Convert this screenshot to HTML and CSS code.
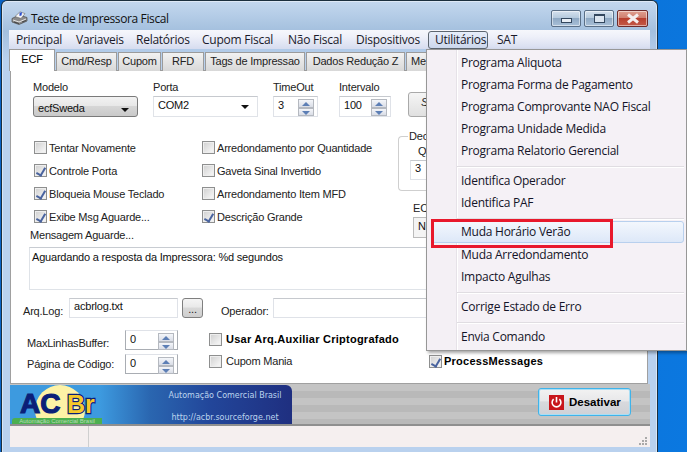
FILE: index.html
```html
<!DOCTYPE html>
<html lang="pt">
<head>
<meta charset="utf-8">
<title>Teste de Impressora Fiscal</title>
<link rel="stylesheet" href="styles.css">
</head>
<body>
<div class="window">
  <div class="titlebar">
    <svg class="appicon" width="17" height="14" viewBox="0 0 17 14"><path d="M1 7.5 L8 4 L16 6.5 L16 10 L8 13.5 L1 11 Z" fill="#8b8b8b" stroke="#4a4a4a" stroke-width=".7"/><path d="M4 5.5 L9 .8 L14 2.6 L10 7.5 Z" fill="#f4f4f4" stroke="#666" stroke-width=".6"/><path d="M8.5 1.8 L11 1.2 L10.5 4.5 L8.5 5 Z" fill="#2a4fd0"/><path d="M2 9 L8 11 L15 8" fill="none" stroke="#ececec" stroke-width=".9"/><path d="M3 11 L8 12.5 M11 11 L15 9.5" stroke="#333" stroke-width=".8"/></svg>
    <span class="title">Teste de Impressora Fiscal</span>
    <div class="winbtns">
      <span class="winbtn"><i class="glyph-min"></i></span>
      <span class="winbtn"><i class="glyph-max"></i></span>
      <span class="winbtn close"><svg width="18" height="11" viewBox="0 0 18 11"><path d="M4 1.5 L14 9.5 M14 1.5 L4 9.5" stroke="#f4eeee" stroke-width="3"/></svg></span>
    </div>
  </div>
  <div class="client">
    <nav class="menubar">
      <span class="mi m-principal">Principal</span>
      <span class="mi m-var">Variaveis</span>
      <span class="mi m-rel">Relatórios</span>
      <span class="mi m-cup">Cupom Fiscal</span>
      <span class="mi m-nao">Não Fiscal</span>
      <span class="mi m-dis">Dispositivos</span>
      <span class="mi m-uti">Utilitários</span>
      <span class="mi m-sat">SAT</span>
    </nav>
    <div class="tabs">
      <span class="tab active t1">ECF</span>
      <span class="tab t2">Cmd/Resp</span>
      <span class="tab t3">Cupom</span>
      <span class="tab t4">RFD</span>
      <span class="tab t5">Tags de Impressao</span>
      <span class="tab t6">Dados Redução Z</span>
      <span class="tab t7">Me</span>
    </div>
    <main class="panel">
      <div class="row-top">
        <div class="field f-modelo"><label>Modelo</label><div class="select aero"><span>ecfSweda</span><i class="arrow"></i></div></div>
        <div class="field f-porta"><label>Porta</label><div class="select"><span>COM2</span><i class="arrow"></i></div></div>
        <div class="field f-time"><label>TimeOut</label><div class="spin"><span>3</span><b class="spinbtns"><i class="up"></i><i class="down"></i></b></div></div>
        <div class="field f-int"><label>Intervalo</label><div class="spin"><span>100</span><b class="spinbtns"><i class="up"></i><i class="down"></i></b></div></div>
        <div class="toolbtn">S</div>
      </div>
      <div class="checks">
        <div class="col c1">
          <div class="chk"><i class="box"></i>Tentar Novamente</div>
          <div class="chk"><i class="box on"></i>Controle Porta</div>
          <div class="chk"><i class="box on"></i>Bloqueia Mouse Teclado</div>
          <div class="chk"><i class="box on"></i>Exibe Msg Aguarde...</div>
        </div>
        <div class="col c2">
          <div class="chk"><i class="box"></i>Arredondamento por Quantidade</div>
          <div class="chk"><i class="box"></i>Gaveta Sinal Invertido</div>
          <div class="chk"><i class="box"></i>Arredondamento Item MFD</div>
          <div class="chk"><i class="box on"></i>Descrição Grande</div>
        </div>
        <div class="col c3">
          <div class="group">
            <span class="legend">Dec</span>
            <span class="q">Q</span>
            <div class="edit e-dec">3</div>
          </div>
          <div class="ec">EC</div>
          <div class="edit e-ec">N</div>
        </div>
      </div>
      <div class="msg-label">Mensagem Aguarde...</div>
      <div class="memo">Aguardando a resposta da Impressora: %d segundos</div>
      <div class="row-log">
        <label class="l-log">Arq.Log:</label>
        <div class="edit e-log">acbrlog.txt</div>
        <div class="dots">...</div>
        <label class="l-op">Operador:</label>
        <div class="edit e-op"></div>
      </div>
      <div class="row-bottom">
        <div class="spins">
          <div class="spinrow"><label class="l-max">MaxLinhasBuffer:</label><div class="spin sp2"><span>0</span><b class="spinbtns"><i class="up"></i><i class="down"></i></b></div></div>
          <div class="spinrow"><label class="l-pag">Página de Código:</label><div class="spin sp2"><span>0</span><b class="spinbtns"><i class="up"></i><i class="down"></i></b></div></div>
        </div>
        <div class="opts">
          <div class="chk strong"><i class="box"></i>Usar Arq.Auxiliar Criptografado</div>
          <div class="chk"><i class="box"></i>Cupom Mania</div>
        </div>
        <div class="chk strong pm"><i class="box on"></i>ProcessMessages</div>
      </div>
    </main>
    <div class="banner">
      <div class="logo">
        <div class="logo-mark">
          <i class="sun"></i>
          <span class="ac">AC</span><span class="br">Br</span>
          <span class="strip">Automação Comercial Brasil</span>
        </div>
        <div class="logo-text">
          <span>Automação Comercial Brasil</span>
          <span>http://acbr.sourceforge.net</span>
        </div>
      </div>
      <div class="deact">
        <svg width="15" height="15" viewBox="0 0 15 15"><rect width="15" height="15" fill="#c8161b"/><path d="M4.6 4.2 A4.4 4.4 0 1 0 10.4 4.2" fill="none" stroke="#fff" stroke-width="1.6"/><path d="M7.5 2 V7.5" stroke="#fff" stroke-width="1.6"/></svg>
        <span>Desativar</span>
      </div>
    </div>
    <footer class="status">
      <span class="st1"></span>
      <span class="st2"></span>
      <svg class="grip" width="10" height="10" viewBox="0 0 10 10"><path d="M7 1h2v2H7zM4 4h2v2H4zM7 4h2v2H7zM1 7h2v2H1zM4 7h2v2H4zM7 7h2v2H7z" fill="#a9a9a9"/></svg>
    </footer>
  </div>
</div>

<div class="menu">
  <div class="item">Programa Aliquota</div>
  <div class="item">Programa Forma de Pagamento</div>
  <div class="item">Programa Comprovante NAO Fiscal</div>
  <div class="item">Programa Unidade Medida</div>
  <div class="item">Programa Relatorio Gerencial</div>
  <div class="sep"></div>
  <div class="item">Identifica Operador</div>
  <div class="item">Identifica PAF</div>
  <div class="sep s2"></div>
  <div class="item hot">Muda Horário Verão</div>
  <div class="item">Muda Arredondamento</div>
  <div class="item">Impacto Agulhas</div>
  <div class="sep"></div>
  <div class="item">Corrige Estado de Erro</div>
  <div class="sep"></div>
  <div class="item">Envia Comando</div>
</div>
<div class="callout"></div>
</body>
</html>
```

FILE: styles.css
```css
* { box-sizing: border-box; }
html, body { margin: 0; height: 100%; }
body {
  width: 687px; height: 452px; position: relative; overflow: hidden;
  background: linear-gradient(100deg, #0a62c4 0%, #0b78e0 100%);
  font: 11px "Liberation Sans", Arial, sans-serif;
  letter-spacing: -.2px;
  color: #222;
}
.window {
  position: absolute; left: 1px; top: 0; width: 657px; height: 460px;
  border: 1px solid #1c2f3e; border-bottom: 0; border-radius: 6px 6px 0 0;
  background: linear-gradient(180deg, #c4d8ef 0, #a4c0de 30px, #b9d1ee 60px);
  box-shadow: inset 0 0 0 1px rgba(255,255,255,.45);
}
.titlebar { height: 29px; display: flex; align-items: center; padding: 0 9px; position: relative; }
.appicon { margin-top: 5px; flex: none; }
.title {
  font: 12px "Open Sans", "Noto Sans", sans-serif; color: #111; margin: 6px 0 0 3px;
  letter-spacing: -.38px;
}
.winbtns { margin-left: auto; display: flex; gap: 3px; align-self: flex-start; margin-top: 9px; }
.winbtn {
  width: 30px; height: 17px; border: 1px solid #5a6f87; border-radius: 2px;
  background: linear-gradient(180deg, #d5e1ee 0, #b6cade 45%, #8fa9c4 50%, #a9c0d8 100%);
  box-shadow: inset 0 0 0 1px rgba(255,255,255,.5);
  display: flex; align-items: center; justify-content: center;
}
.winbtn.close {
  width: 31px; border-color: #6e2b2b;
  background: linear-gradient(180deg, #e0a090 0, #d08070 45%, #b8402f 50%, #c45a48 100%);
}
.glyph-min { width: 11px; height: 5px; margin-top: 4px; border: 1px solid #33475e; background: #e8eef5; }
.glyph-max { width: 11px; height: 9px; border: 1px solid #33475e; border-top-width: 2px; background: #dbe5f0; }

.client { margin: 0 7px; }
.menubar {
  height: 19px; position: relative; display: flex; align-items: center;
  background: linear-gradient(180deg, #f6f7fc 0, #eef0f9 35%, #d6dcef 100%);
  font: 12px "Open Sans", "Noto Sans", sans-serif; color: #1a1a2a;
  letter-spacing: -.25px;
}
.mi { white-space: nowrap; }
.m-principal { margin-left: 7px; width: 60px; }
.m-var { width: 60px; }
.m-rel { width: 66px; }
.m-cup { width: 86px; }
.m-nao { width: 68px; }
.m-dis { width: 72px; }
.m-uti {
  width: 60px; height: 18px; line-height: 15px; padding-left: 6px;
  border: 1px solid #5d6670; border-radius: 3px;
  background: linear-gradient(180deg, #e8eefa, #ccd7ec);
}
.m-sat { margin-left: 9px; }

.tabs { height: 22px; display: flex; gap: 1px; align-items: flex-end; margin-bottom: -1px; position: relative; z-index: 1; }
.tab {
  height: 19px; line-height: 17px; text-align: center; white-space: nowrap; overflow: hidden;
  border: 1px solid #9b9b9b; border-bottom: 0; color: #222;
  background: linear-gradient(180deg, #f2f2f2 0, #e6e6e6 45%, #d8d8d8 100%);
}
.tab.active { height: 22px; line-height: 18px; background: #fff; color: #000; }
.t1 { width: 46px; } .t2 { width: 61px; } .t3 { width: 43px; } .t4 { width: 42px; }
.t5 { width: 100px; } .t6 { width: 99px; } .t7 { width: 24px; text-align: left; padding-left: 4px; }

.panel {
  height: 314px; margin-left: 1px; width: 638px; background: #fff;
  border: 1px solid #a0a0a0; border-top-color: #9b9b9b; padding-top: 9px;
}
label { display: block; white-space: nowrap; }
.row-top { display: flex; padding-left: 22px; height: 37px; }
.field label { height: 16px; line-height: 15px; }
.f-modelo, .f-porta { width: 105px; margin-right: 15px; }
.f-time { width: 45px; margin-right: 21px; }
.f-int { width: 52px; margin-right: 17px; }
.select {
  height: 21px; display: flex; align-items: center; justify-content: space-between;
  padding: 0 8px 3px 4px; border: 1px solid #e0e3e8; border-top-color: #c6c9ce; background: #fff; color: #111;
}
.select.aero {
  border: 1px solid #7a7a7a; border-radius: 3px; padding: 3px 8px 0 4px;
  background: linear-gradient(180deg, #f2f2f2 0, #e8e8e8 45%, #d6d6d6 50%, #c9c9c9 100%);
}
.select .arrow { margin-top: 3px; }
.arrow { width: 0; height: 0; border: 4px solid transparent; border-top: 4px solid #111; border-bottom: 0; display: block; }
.spin {
  height: 21px; display: flex; align-items: flex-start; justify-content: space-between;
  border: 1px solid #dfe2e8; border-top-color: #c6c9ce; background: #fff; padding: 2px 3px 0 4px; color: #111;
}
.spinbtns { display: flex; flex-direction: column; width: 16px; height: 17px; }
.spinbtns i {
  flex: 1; border: 1px solid #b5b9c0; background: linear-gradient(180deg, #f4f6fa, #d9dde6); position: relative; display: block;
}
.spinbtns i::after {
  content: ""; position: absolute; left: 3px; top: 2px; width: 0; height: 0;
  border: 4px solid transparent; border-top: 0; border-bottom: 4px solid #5d7fb5;
}
.spinbtns i.down::after { border-bottom: 0; border-top: 4px solid #5d7fb5; }
.toolbtn {
  width: 40px; height: 25px; margin-top: 12px; border: 1px solid #a9a9a9; border-radius: 3px;
  background: linear-gradient(180deg, #f5f5f5, #e0e0e0); padding: 3px 0 0 12px; font-style: italic;
}

.checks { display: flex; height: 93px; margin-top: 19px; }
.col { flex: none; }
.c1 { width: 168px; margin-left: 23px; }
.c2 { width: 196px; }
.c3 { width: 80px; }
.chk { height: 23px; display: flex; align-items: center; white-space: nowrap; }
.box {
  width: 13px; height: 13px; flex: none; margin-right: 2px; position: relative; display: block;
  border: 1px solid #8e8f8f; background: linear-gradient(135deg, #cfcfcf, #f2f2f2 80%);
  box-shadow: inset 0 0 0 1px #eee;
}
.box.on::after {
  content: ""; position: absolute; left: 3px; top: 1px; width: 4px; height: 8px;
  border: solid #4a649f; border-width: 0 2px 2px 0; transform: rotate(30deg);
}
.group {
  position: relative; height: 55px; border: 1px solid #cfcfcf; border-radius: 4px; border-right: 0; padding: 8px 0 0 11px;
}
.legend { position: absolute; left: 9px; top: -7px; width: 30px; background: #fff; padding: 0 1px; }
.q { display: block; padding-left: 8px; height: 15px; }
.edit { border: 1px solid #dfe2e8; border-top-color: #c6c9ce; background: #fff; color: #111; padding: 1px 4px 0; white-space: nowrap; }
.e-dec { height: 20px; width: 60px; }
.ec { margin: 10px 0 2px 15px; height: 14px; line-height: 14px; }
.e-ec { height: 21px; margin-left: 15px; width: 50px; background: #f4f4f4; border-color: #bbb; padding-top: 2px; }

.msg-label { margin: -1px 0 0 19px; height: 19px; line-height: 14px; }
.memo {
  margin-left: 18px; width: 612px; height: 43px; border: 1px solid #dfe3e8; border-top-color: #c8ccd2; padding: 3px 2px; color: #111;
}
.row-log { display: flex; align-items: flex-end; margin-top: 7px; height: 21px; padding-left: 12px; }
.l-log { width: 46px; line-height: 13px; }
.e-log { width: 109px; height: 20px; }
.dots {
  width: 21px; height: 20px; margin-left: 4px; text-align: center; border: 1px solid #7f7f7f; border-radius: 3px;
  background: linear-gradient(180deg, #f4f4f4 0, #e9e9e9 45%, #d8d8d8 50%, #cfcfcf 100%); line-height: 20px;
}
.l-op { margin-left: 18px; width: 52px; line-height: 13px; }
.e-op { width: 350px; height: 20px; }

.row-bottom { display: flex; margin-top: 12px; padding-left: 16px; }
.spins { width: 151px; flex: none; }
.spinrow { display: flex; height: 20px; margin-bottom: 4px; align-items: flex-end; }
.spinrow label { width: 98px; line-height: 13px; }
.l-pag { margin-bottom: 3px; }
.sp2 { width: 53px; height: 20px; border-color: #a9adb3; border-top-color: #dfe2e8; }
.opts { width: 220px; margin-left: 31px; flex: none; margin-top: -2px; }
.opts .chk { height: 22px; }
.opts .chk .box { margin-right: 4px; }
.strong { font-weight: 700; color: #000; letter-spacing: .25px; }
.pm { margin-top: 20px; height: 22px; }

.banner {
  height: 42px; margin-left: 1px; width: 640px; display: flex; align-items: flex-start; justify-content: space-between;
  background: repeating-linear-gradient(180deg, #c4c4c4 0 7px, #b9b9b9 7px 14px);
  border-bottom: 2px solid #8f8f8f; padding: 1px 19px 0 0;
}
.logo { width: 282px; height: 39px; display: flex; border-radius: 0 6px 0 0; overflow: hidden;
  background: linear-gradient(90deg, #3d9adf 0, #3d9adf 90px, #2a66b0 140px, #22469a 200px, #1f2f80 282px); }
.logo-mark { width: 92px; height: 39px; position: relative; overflow: hidden; flex: none; font-family: "Liberation Sans", sans-serif; font-weight: 700; letter-spacing: 0; }
.sun { position: absolute; left: 25px; top: 0; width: 50px; height: 50px; border-radius: 50%; background: #fdf2a6; }
.ac { position: absolute; left: 10px; top: 8px; font-size: 28px; line-height: 22px; color: #0b1f78; -webkit-text-stroke: 1.2px #0b1f78; }
.br { position: absolute; left: 57px; top: 8px; font-size: 25px; line-height: 22px; color: #f6c92a; -webkit-text-stroke: 2.4px #0b1f78; paint-order: stroke fill; }
.strip {
  position: absolute; left: 2px; right: 0; bottom: 0; height: 6px; background: #4caf50; color: #b8dcb8;
  font-family: "Liberation Sans", sans-serif; font-weight: 400; font-size: 6px; line-height: 6px; text-align: center; border-radius: 3px 0 0 0; white-space: nowrap;
}
.logo-text {
  margin-left: 64px; display: flex; flex-direction: column; justify-content: space-between; padding: 6px 0 2px;
  font: 8px "DejaVu Sans", sans-serif; letter-spacing: 0; color: #bcd4ee; width: 118px; align-items: center; white-space: nowrap;
}
.deact {
  width: 93px; height: 28px; margin-top: 3px; display: flex; align-items: center; padding-left: 10px; gap: 5px;
  border: 1px solid #3fb3ea; border-radius: 3px; box-shadow: inset 0 0 0 1px #a9def5;
  background: linear-gradient(180deg, #f2f2f2 0, #e8e8ea 45%, #d8d9dd 50%, #cfd1d6 100%);
  font-weight: 700; font-size: 11.5px; letter-spacing: 0; color: #000;
}
.status {
  height: 21px; margin-left: 1px; width: 640px; display: flex; position: relative;
  background: #f5efef;
}
.st1 { width: 79px; border-right: 1px solid #cfcfcf; }
.grip { position: absolute; right: 2px; bottom: 1px; }

.menu {
  position: absolute; z-index: 5; left: 426px; top: 49px; width: 261px; height: 302px;
  background: linear-gradient(90deg, #f4f0f5 0 29px, #e6e2e8 29px 30px, #fff 30px 31px, #f5f1f6 31px);
  border: 1px solid #979797; padding: 2px 2px 0 3px;
  box-shadow: 2px 2px 3px rgba(0,0,0,.35);
  font: 12px "Open Sans", "Noto Sans", sans-serif; color: #141428; letter-spacing: -.25px;
}
.item { height: 22px; line-height: 21px; padding-left: 31px; white-space: nowrap; }
.sep { height: 8px; margin-left: 27px; background: linear-gradient(180deg, transparent 4px, #e0dde2 4px 5px, #fff 5px 6px, transparent 6px); }
.s2 { height: 7px; }
.hot { margin: 0 0 1px 1px; border: 1px solid #b8d0ee; border-radius: 3px; padding-left: 29px; background: linear-gradient(180deg, #f3f7fd, #dde8f8); line-height: 19px; }
.callout { position: absolute; z-index: 6; left: 431px; top: 219px; width: 182px; height: 29px; border: 3px solid #e8192c; }
```
